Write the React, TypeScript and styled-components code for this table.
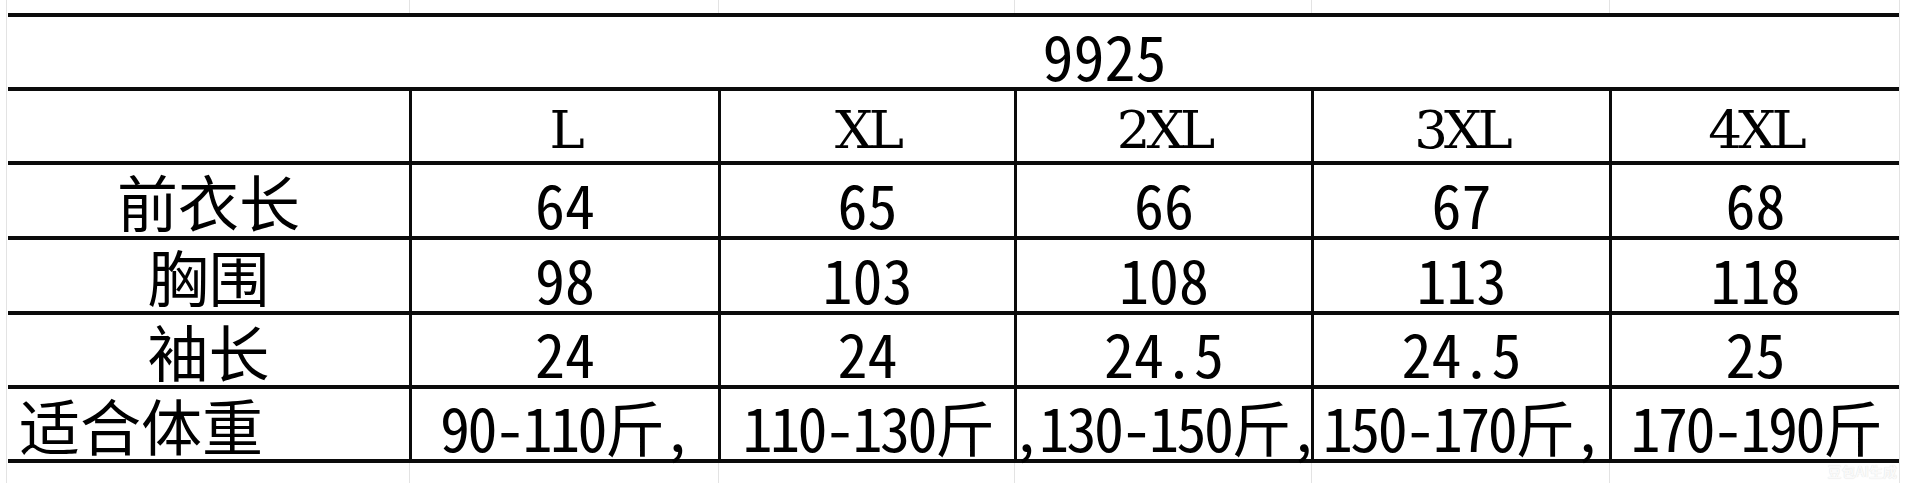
import React from 'react';
import styled, { createGlobalStyle } from 'styled-components';

const GlobalStyle = createGlobalStyle`
  html, body {
    margin: 0;
    padding: 0;
    background: #fff;
  }
  body {
    font-family: "Noto Sans CJK SC", sans-serif;
    color: #000;
  }
`;

const COLS = '401px 309px 296px 297px 298px 290px';
const INK = '#0b0b0b';
const GRID = '#e3e3e3';

const sizes = ['L', 'XL', '2XL', '3XL', '4XL'];

const rows: { label: string; alignLeft?: boolean; tight?: boolean; values: string[] }[] = [
  { label: '前衣长', values: ['64', '65', '66', '67', '68'] },
  { label: '胸围', values: ['98', '103', '108', '113', '118'] },
  { label: '袖长', values: ['24', '24', '24.5', '24.5', '25'] },
  {
    label: '适合体重',
    alignLeft: true,
    tight: true,
    values: ['90-110斤,', '110-130斤', ',130-150斤,', '150-170斤,', '170-190斤'],
  },
];

export default function App() {
  return (
    <>
      <GlobalStyle />
      <Sheet>
        <GridStrip $height={13}>
          {sizes.concat('').map((_, i) => (
            <StripCell key={i} $last={i === 5} />
          ))}
        </GridStrip>

        <Table>
          <TitleCell>9925</TitleCell>

          <LabelCell />
          {sizes.map((s) => (
            <SizeCell key={s}>{s}</SizeCell>
          ))}

          {rows.map((row) => (
            <React.Fragment key={row.label}>
              <LabelCell $left={row.alignLeft}>{row.label}</LabelCell>
              {row.values.map((v, i) => (
                <ValueCell key={i} $tight={row.tight}>
                  {v}
                </ValueCell>
              ))}
            </React.Fragment>
          ))}
        </Table>

        <GridStrip $height={20}>
          {sizes.concat('').map((_, i) => (
            <StripCell key={i} $last={i === 5} />
          ))}
        </GridStrip>

        <Watermark>豆包AI生成</Watermark>
      </Sheet>
    </>
  );
}

const Sheet = styled.div`
  position: relative;
  box-sizing: border-box;
  margin-left: 6px;
  width: 1894px;
  height: 483px;
  padding-left: 1px;
  border-left: 1px solid ${GRID};
  border-right: 1px solid ${GRID};
  overflow: hidden;
`;

const GridStrip = styled.div<{ $height: number }>`
  display: grid;
  grid-template-columns: ${COLS};
  height: ${(p) => p.$height}px;
`;

const StripCell = styled.div<{ $last?: boolean }>`
  border-right: ${(p) => (p.$last ? 'none' : `1px solid ${GRID}`)};
  margin-right: -1px;
`;

const Table = styled.div`
  display: grid;
  grid-template-columns: ${COLS};
  grid-template-rows: 74px 74px 75px 75px 74px 74px;
  border-top: 4px solid ${INK};
`;

const Cell = styled.div`
  box-sizing: border-box;
  display: flex;
  align-items: center;
  justify-content: center;
  min-width: 0;
  border-bottom: 4px solid ${INK};
  white-space: nowrap;
  line-height: 1;
  font-size: 60px;
`;

const TitleCell = styled(Cell)`
  grid-column: 1 / -1;
  padding-left: 302px;
  padding-top: 4px;
  font-family: "Noto Sans Mono CJK SC", "Noto Sans CJK SC", monospace;
  font-feature-settings: "hwid" 1;
  font-size: 62px;
`;

const LabelCell = styled(Cell)<{ $left?: boolean }>`
  justify-content: ${(p) => (p.$left ? 'flex-start' : 'center')};
  padding-left: ${(p) => (p.$left ? '11px' : '0')};
  font-family: "Noto Sans CJK SC", sans-serif;
  font-size: 61px;
`;

const SizeCell = styled(Cell)`
  border-left: 3px solid ${INK};
  font-family: "DejaVu Serif", "Liberation Serif", serif;
  font-size: 53px;
  letter-spacing: -4px;
  padding-top: 6px;
`;

const ValueCell = styled(Cell)<{ $tight?: boolean }>`
  border-left: 3px solid ${INK};
  font-family: "Noto Sans Mono CJK SC", "Noto Sans CJK SC", monospace;
  font-feature-settings: "hwid" 1;
  letter-spacing: ${(p) => (p.$tight ? '-2.5px' : '0')};
  padding-top: 4px;
`;

const Watermark = styled.div`
  position: absolute;
  right: 2px;
  bottom: 2px;
  font-family: "Noto Sans CJK SC", sans-serif;
  font-size: 14px;
  font-weight: 700;
  color: #fafafa;
  text-shadow: 0 0 1px #d8d8d8;
`;
